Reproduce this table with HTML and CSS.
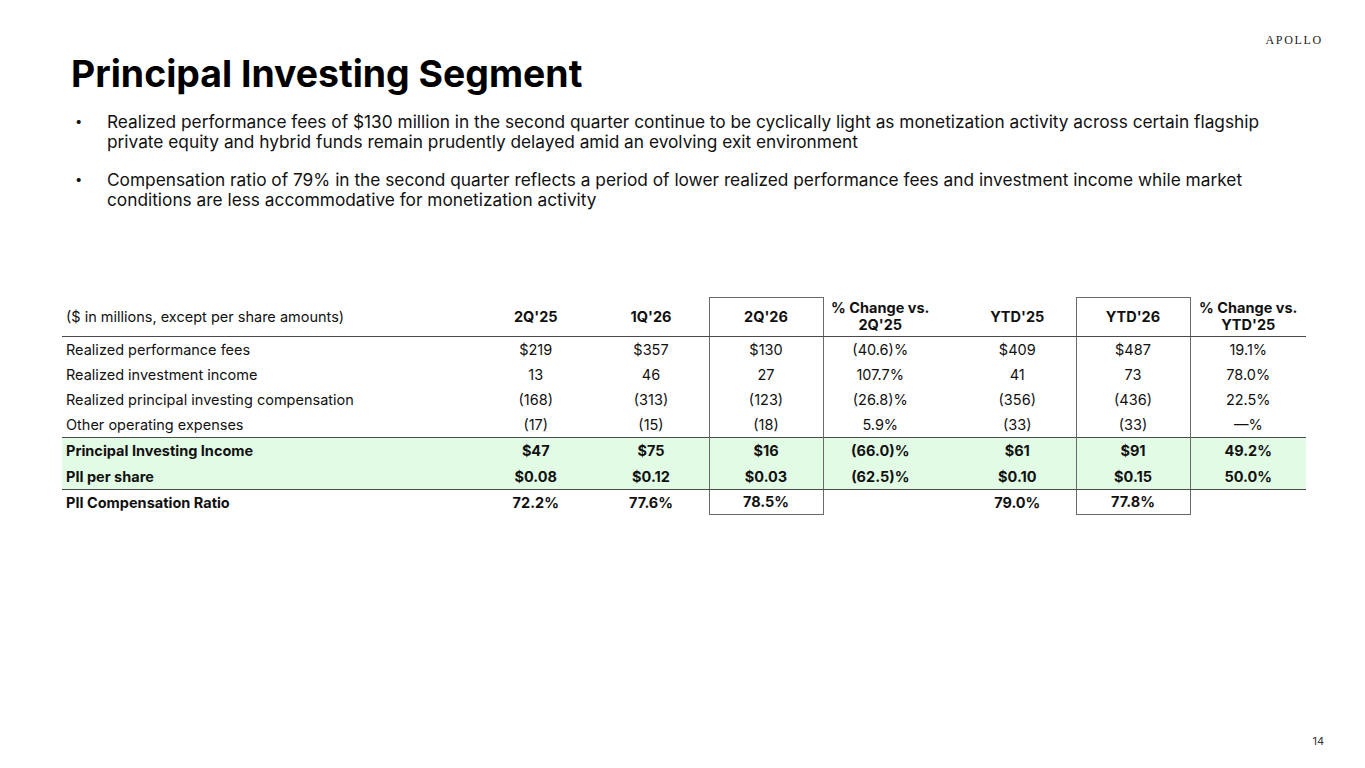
FILE: index.html
```html
<!DOCTYPE html>
<html lang="en">
<head>
<meta charset="utf-8">
<title>Principal Investing Segment</title>
<link rel="stylesheet" href="styles.css">
</head>
<body>
<div class="slide">
  <header class="top">
    <div class="logo">APOLLO</div>
  </header>
  <h1 class="title">Principal Investing Segment</h1>
  <ul class="bullets">
    <li>Realized performance fees of $130 million in the second quarter continue to be cyclically light as monetization activity across certain flagship private equity and hybrid funds remain prudently delayed amid an evolving exit environment</li>
    <li>Compensation ratio of 79% in the second quarter reflects a period of lower realized performance fees and investment income while market conditions are less accommodative for monetization activity</li>
  </ul>
  <table class="fin">
    <colgroup>
      <col class="c-label">
      <col class="c-q">
      <col class="c-q">
      <col class="c-box">
      <col class="c-chg">
      <col class="c-ytd">
      <col class="c-box">
      <col class="c-chg2">
    </colgroup>
    <thead>
      <tr>
        <th class="label">($ in millions, except per share amounts)</th>
        <th>2Q'25</th>
        <th>1Q'26</th>
        <th class="box box-top">2Q'26</th>
        <th class="chg">% Change vs.<br>2Q'25</th>
        <th class="ytd">YTD'25</th>
        <th class="box box-top">YTD'26</th>
        <th>% Change vs.<br>YTD'25</th>
      </tr>
    </thead>
    <tbody>
      <tr>
        <td class="label">Realized performance fees</td>
        <td>$219</td><td>$357</td><td class="box">$130</td><td class="chg">(40.6)%</td><td class="ytd">$409</td><td class="box">$487</td><td>19.1%</td>
      </tr>
      <tr>
        <td class="label">Realized investment income</td>
        <td>13</td><td>46</td><td class="box">27</td><td class="chg">107.7%</td><td class="ytd">41</td><td class="box">73</td><td>78.0%</td>
      </tr>
      <tr>
        <td class="label">Realized principal investing compensation</td>
        <td>(168)</td><td>(313)</td><td class="box">(123)</td><td class="chg">(26.8)%</td><td class="ytd">(356)</td><td class="box">(436)</td><td>22.5%</td>
      </tr>
      <tr>
        <td class="label">Other operating expenses</td>
        <td>(17)</td><td>(15)</td><td class="box">(18)</td><td class="chg">5.9%</td><td class="ytd">(33)</td><td class="box">(33)</td><td>—%</td>
      </tr>
      <tr class="hl hl-first">
        <td class="label">Principal Investing Income</td>
        <td>$47</td><td>$75</td><td class="box">$16</td><td class="chg">(66.0)%</td><td class="ytd">$61</td><td class="box">$91</td><td>49.2%</td>
      </tr>
      <tr class="hl hl-last">
        <td class="label">PII per share</td>
        <td>$0.08</td><td>$0.12</td><td class="box">$0.03</td><td class="chg">(62.5)%</td><td class="ytd">$0.10</td><td class="box">$0.15</td><td>50.0%</td>
      </tr>
      <tr class="strong">
        <td class="label">PII Compensation Ratio</td>
        <td>72.2%</td><td>77.6%</td><td class="box box-bottom">78.5%</td><td class="chg"></td><td class="ytd">79.0%</td><td class="box box-bottom">77.8%</td><td></td>
      </tr>
    </tbody>
  </table>
  <footer class="pageno">14</footer>
</div>
</body>
</html>
```

FILE: styles.css
```css
* { box-sizing: border-box; }
html, body { margin: 0; padding: 0; background: #ffffff; }
body {
  font-family: Inter, "Noto Sans", "Liberation Sans", sans-serif;
  color: #1a1a1a;
}
.slide {
  width: 1365px;
  height: 768px;
  position: relative;
  overflow: hidden;
}
.top {
  display: flex;
  justify-content: flex-end;
  padding: 33px 42px 0 0;
  height: 45px;
}
.logo {
  font-family: "Liberation Serif", "DejaVu Serif", serif;
  font-size: 12px;
  letter-spacing: 1.7px;
  color: #222;
  line-height: 14px;
}
.title {
  margin: 9px 0 0 71px;
  font-size: 37.4px;
  font-weight: 700;
  line-height: 40px;
  color: #000;
  letter-spacing: 0;
}
.bullets {
  list-style: none;
  margin: 18px 0 0 0;
  padding: 0 0 0 107px;
  width: 1290px;
  font-size: 17.3px;
  line-height: 19.5px;
  color: #111;
}
.bullets li {
  position: relative;
  margin-bottom: 19px;
}
.bullets li::before {
  content: "•";
  position: absolute;
  left: -32px;
  top: 0;
  font-size: 13px;
}
.fin {
  margin: 88px 0 0 62px;
  border-collapse: collapse;
  table-layout: fixed;
  width: 1243px;
  font-size: 14.5px;
  color: #111;
}
.c-label { width: 416px; }
.c-q { width: 115.5px; }
.c-box { width: 114px; }
.c-chg { width: 128px; }
.c-ytd { width: 125px; }
.c-chg2 { width: 116px; }
.fin th, .fin td {
  text-align: center;
  padding: 0;
  border: 0;
}
.fin th {
  font-weight: 700;
  height: 39px;
  line-height: 16.5px;
  vertical-align: middle;
  border-bottom: 1px solid #4a4a4a;
}
.fin td { height: 25.2px; }
.fin .label { text-align: left; padding-left: 4px; }
.fin th.label { font-weight: 400; }
.fin .chg { padding-right: 14px; }
.fin .ytd { padding-left: 8px; }
.fin .box {
  border-left: 1px solid #6a6a6a;
  border-right: 1px solid #6a6a6a;
}
.fin .box-top { border-top: 1px solid #6a6a6a; }
.fin .box-bottom { border-bottom: 1px solid #6a6a6a; }
.fin tr.hl td {
  background: #e2fbe5;
  font-weight: 700;
  height: 26px;
}
.fin tr.hl-first td { border-top: 1px solid #4a4a4a; }
.fin tr.hl-last td { border-bottom: 1px solid #4a4a4a; }
.fin tr.strong td { font-weight: 700; height: 25px; }
.pageno {
  position: absolute;
  right: 41px;
  bottom: 20px;
  font-size: 11px;
  color: #333;
}
```
